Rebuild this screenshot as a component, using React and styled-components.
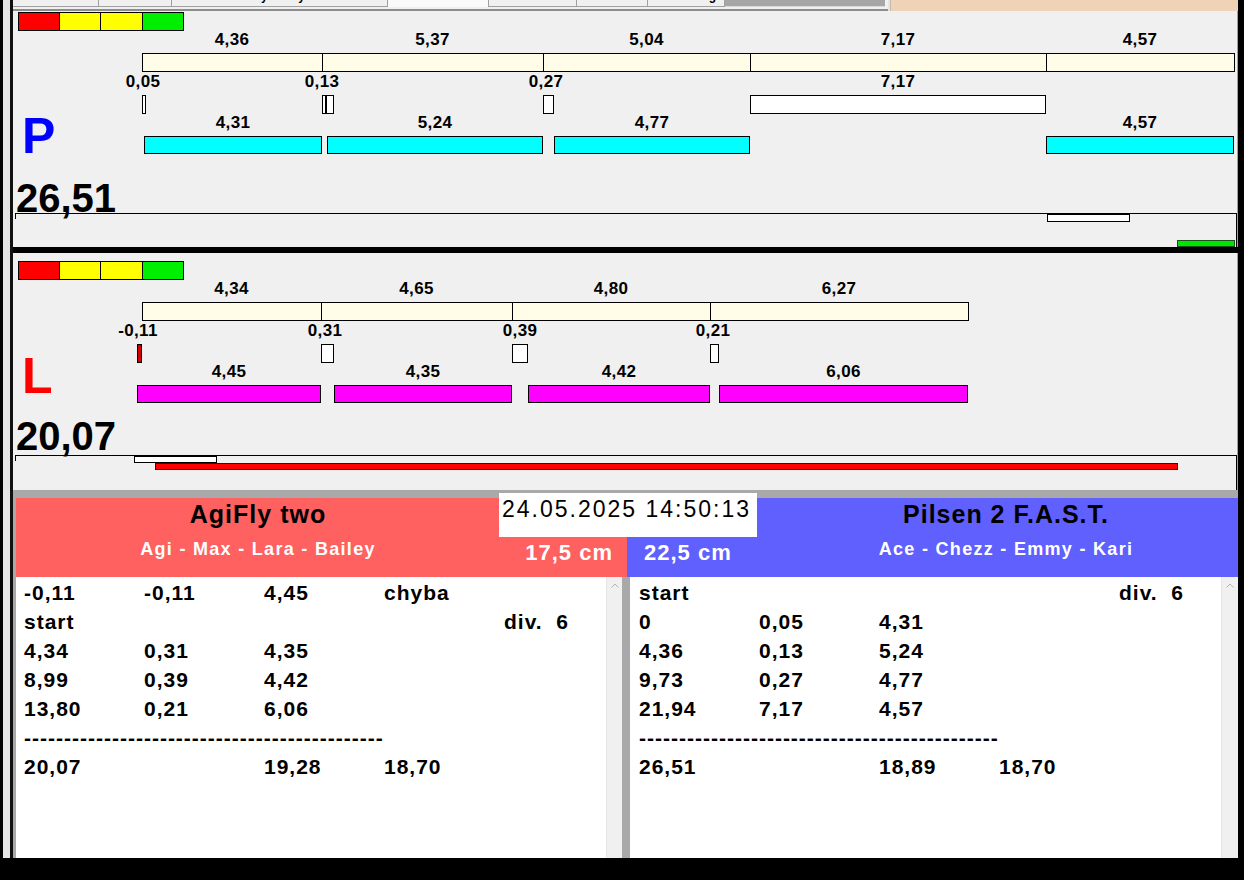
import React from 'react';
import styled, { createGlobalStyle } from 'styled-components';

const GlobalStyle = createGlobalStyle`
  html, body { margin: 0; padding: 0; background: #000; }
  body { font-family: "Liberation Sans", Arial, sans-serif; }
  #root { width: 1244px; height: 880px; }
`;

/* ---------- scale of the time charts ---------- */
const SCALE = 41.19; // px per second
const X0 = 10; // chart-local x of t = 0
const px = (t) => Math.round(X0 + t * SCALE);

/* ---------- window frame ---------- */
const Screen = styled.div`
  width: 1244px;
  height: 880px;
  background: #000;
  overflow: hidden;
`;

const Window = styled.div`
  margin-left: 3px;
  width: 1235px;
  height: 858px;
  background: #e4e4e4;
  display: flex;
`;

const Frame = styled.div`
  margin-left: 7px;
  flex: 1;
  min-width: 0;
  border-left: 3px solid #111;
  display: flex;
  flex-direction: column;
`;

/* ---------- tab strip ---------- */
const TabStrip = styled.div`
  height: 11px;
  display: flex;
  flex: none;
  overflow: hidden;
`;

const TabGroup = styled.div`
  width: 875px;
  height: 11px;
  box-sizing: border-box;
  background: #f0f0f0;
  border-bottom: 2px solid #8c8c8c;
  display: flex;
  align-items: flex-start;
`;

const Tab = styled.div`
  width: ${(p) => p.$w}px;
  height: 7px;
  box-sizing: border-box;
  flex: none;
  overflow: hidden;
  background: ${(p) => (p.$active ? '#fafafa' : '#f0f0f0')};
  border-right: 1px solid #a0a0a0;
  border-bottom: ${(p) => (p.$active ? 'none' : '1px solid #a0a0a0')};
`;

const TabText = styled.div`
  font-size: 12px;
  font-weight: bold;
  line-height: 14px;
  margin-top: -11px;
  padding-left: ${(p) => p.$pl}px;
  white-space: nowrap;
  color: #000;
`;

const TabFiller = styled.div`
  width: ${(p) => p.$w}px;
  height: 6px;
  flex: none;
  background: #a6a6a6;
  border-bottom: 1px solid #d8d8d8;
`;

const PeachTab = styled.div`
  flex: 1;
  height: 11px;
  margin-left: 2px;
  background: #f0d2b6;
  border-left: 1px solid #c8b8a8;
`;

/* ---------- chart sections ---------- */
const ChartSection = styled.section`
  height: ${(p) => p.$h}px;
  padding-top: ${(p) => p.$pt}px;
  box-sizing: border-box;
  flex: none;
  background: #f0f0f0;
  border-right: 1px solid #a0a0a0;
  display: flex;
  flex-direction: column;
`;

const Legend = styled.div`
  margin-left: 5px;
  height: 19px;
  width: fit-content;
  box-sizing: border-box;
  border: 1px solid #000;
  display: flex;
`;

const LegendCell = styled.div`
  width: ${(p) => p.$w}px;
  background: ${(p) => p.$c};
  & + & {
    border-left: 1px solid #000;
  }
`;

const Body = styled.div`
  height: ${(p) => p.$h}px;
  display: grid;
  grid-template-columns: 119px 1fr;
`;

const SideCol = styled.div`
  display: flex;
  flex-direction: column;
`;

const Letter = styled.div`
  margin-top: ${(p) => p.$mt}px;
  margin-left: 9px;
  font-size: 50px;
  line-height: 50px;
  font-weight: bold;
  color: ${(p) => p.$c};
`;

const Total = styled.div`
  margin-top: ${(p) => p.$mt}px;
  margin-left: 3px;
  font-size: 40px;
  line-height: 32px;
  font-weight: bold;
  color: #000;
  white-space: nowrap;
`;

const Chart = styled.div`
  display: flex;
  flex-direction: column;
`;

const LabelRow = styled.div`
  position: relative;
  height: ${(p) => p.$h}px;
`;

const Label = styled.span`
  position: absolute;
  top: ${(p) => p.$top}px;
  transform: translateX(-50%);
  font-size: 17px;
  line-height: 18px;
  font-weight: bold;
  letter-spacing: 0.3px;
  white-space: nowrap;
  color: #000;
`;

const Track = styled.div`
  position: relative;
  height: ${(p) => p.$h}px;
`;

const Seg = styled.div`
  position: absolute;
  top: 0;
  bottom: 0;
  box-sizing: border-box;
  border: 1px solid #000;
  background: ${(p) => p.$c};
`;

const StripBox = styled.div`
  position: relative;
  height: ${(p) => p.$h}px;
  box-sizing: border-box;
  margin-left: 2px;
  border-top: 1px solid #000;
  border-right: 1px solid #000;
  &::before {
    content: '';
    position: absolute;
    left: 0;
    top: 0;
    width: 1px;
    height: 5px;
    background: #000;
  }
`;

const Marker = styled.div`
  position: absolute;
  box-sizing: border-box;
  border: 1px solid ${(p) => p.$b || '#000'};
  background: ${(p) => p.$c};
`;

const ThickRule = styled.div`
  height: 6px;
  flex: none;
  background: #000;
`;

const GreyBand = styled.div`
  height: 8px;
  flex: none;
  background: #a9a9a9;
`;

/* ---------- bottom: teams + result lists ---------- */
const Bottom = styled.div`
  position: relative;
  flex: 1;
  min-height: 0;
  padding-left: 3px;
  background: #a9a9a9;
  display: flex;
  flex-direction: column;
`;

const HeaderRow = styled.div`
  height: 79px;
  flex: none;
  display: grid;
  grid-template-columns: 611px 611px;
`;

const TeamHeader = styled.div`
  background: ${(p) => p.$c};
  display: flex;
`;

const NameBlock = styled.div`
  flex: ${(p) => (p.$w ? 'none' : '1')};
  width: ${(p) => (p.$w ? `${p.$w}px` : 'auto')};
  display: flex;
  flex-direction: column;
  align-items: center;
`;

const TeamTitle = styled.div`
  font-size: 25px;
  line-height: 33px;
  font-weight: bold;
  letter-spacing: 1px;
  color: #000;
  white-space: nowrap;
`;

const TeamDogs = styled.div`
  margin-top: 6px;
  font-size: 18px;
  line-height: 24px;
  font-weight: bold;
  letter-spacing: 1.3px;
  color: #fff;
  white-space: nowrap;
`;

const HeightBlock = styled.div`
  flex: ${(p) => (p.$w ? 'none' : '1')};
  width: ${(p) => (p.$w ? `${p.$w}px` : 'auto')};
  display: flex;
  flex-direction: column;
  justify-content: flex-end;
  align-items: ${(p) => (p.$right ? 'flex-end' : 'flex-start')};
  padding: ${(p) => (p.$right ? '0 14px 12px 0' : '0 0 12px 17px')};
`;

const HeightText = styled.div`
  font-size: 22px;
  line-height: 24px;
  font-weight: bold;
  letter-spacing: 1px;
  color: #fff;
  white-space: nowrap;
`;

const DateBox = styled.div`
  position: absolute;
  left: 486px;
  top: -5px;
  width: 258px;
  height: 44px;
  box-sizing: border-box;
  padding: 3px 0 0 3px;
  background: #fff;
  font-size: 23px;
  line-height: 26px;
  letter-spacing: 2px;
  color: #000;
  white-space: nowrap;
`;

const ListsRow = styled.div`
  flex: 1;
  min-height: 0;
  display: grid;
  grid-template-columns: 606px 608px;
  column-gap: 8px;
`;

const ListPanel = styled.div`
  display: flex;
  background: #fff;
  min-height: 0;
  min-width: 0;
`;

const ListBody = styled.div`
  flex: 1;
  min-width: 0;
  overflow: hidden;
  padding: 1px 0 0 ${(p) => p.$pl}px;
  display: grid;
  grid-template-columns: repeat(4, 120px) 1fr;
  grid-auto-rows: 29px;
  align-content: start;
  font-size: 21px;
  line-height: 29px;
  font-weight: bold;
  letter-spacing: 1px;
  color: #000;
`;

const Cell = styled.div`
  white-space: pre;
`;

const DashCell = styled.div`
  grid-column: 1 / -1;
  white-space: nowrap;
`;

const ScrollBar = styled.div`
  width: ${(p) => p.$w}px;
  flex: none;
  background: #f0f0f0;
  border-left: 1px solid #e6e6e6;
  display: flex;
  justify-content: center;
  align-items: flex-start;
  padding-top: 6px;
  box-sizing: border-box;
`;

/* ---------- data ---------- */
const cumulative = (parts) => {
  const out = [];
  let t = 0;
  parts.forEach((p) => {
    out.push([t, +(t + p.v).toFixed(2), p.label]);
    t = +(t + p.v).toFixed(2);
  });
  return out;
};

const CHARTS = [
  {
    key: 'P',
    letter: 'P',
    letterColor: '#0000ff',
    total: '26,51',
    h: 236,
    pt: 1,
    bodyH: 182,
    letterTop: 80,
    totalTop: 21,
    stripH: 34,
    main: cumulative([
      { v: 4.36, label: '4,36' },
      { v: 5.37, label: '5,37' },
      { v: 5.04, label: '5,04' },
      { v: 7.17, label: '7,17' },
      { v: 4.57, label: '4,57' },
    ]),
    gaps: [
      [0, 0.05, '#fff'],
      [4.36, 4.46, '#fff'],
      [4.46, 4.65, '#fff'],
      [9.73, 10.0, '#fff'],
      [14.77, 21.94, '#fff'],
    ],
    gapLabels: [
      [0.025, '0,05'],
      [4.38, '0,13'],
      [9.82, '0,27'],
      [18.355, '7,17'],
    ],
    dogColor: '#00ffff',
    dogs: [
      [0.05, 4.36, '4,31'],
      [4.49, 9.73, '5,24'],
      [10.0, 14.77, '4,77'],
      [21.94, 26.51, '4,57'],
    ],
    markers: [
      { left: 1032, top: 0, w: 83, h: 8, c: '#fff' },
      { left: 1162, top: 26, w: 58, h: 7, c: '#00e600', b: '#1a4d1a' },
    ],
  },
  {
    key: 'L',
    letter: 'L',
    letterColor: '#ff0000',
    total: '20,07',
    h: 237,
    pt: 8,
    bodyH: 175,
    letterTop: 71,
    totalTop: 19,
    stripH: 35,
    main: cumulative([
      { v: 4.34, label: '4,34' },
      { v: 4.65, label: '4,65' },
      { v: 4.8, label: '4,80' },
      { v: 6.27, label: '6,27' },
    ]),
    gaps: [
      [-0.11, 0, '#d40000'],
      [4.34, 4.65, '#fff'],
      [8.99, 9.38, '#fff'],
      [13.79, 14.0, '#fff'],
    ],
    gapLabels: [
      [-0.1, '-0,11'],
      [4.44, '0,31'],
      [9.18, '0,39'],
      [13.87, '0,21'],
    ],
    dogColor: '#ff00ff',
    dogs: [
      [-0.11, 4.34, '4,45'],
      [4.65, 8.99, '4,35'],
      [9.38, 13.79, '4,42'],
      [14.0, 20.06, '6,06'],
    ],
    markers: [
      { left: 119, top: 0, w: 83, h: 7, c: '#fff' },
      { left: 140, top: 7, w: 1023, h: 7, c: '#ff0000', b: '#5a0000' },
    ],
  },
];

const LEGEND = [
  ['#ff0000', 40],
  ['#ffff00', 40],
  ['#ffff00', 41],
  ['#00ee00', 40],
];

const DASHES = '-'.repeat(45);

const LEFT_ROWS = [
  ['-0,11', '-0,11', '4,45', 'chyba', ''],
  ['start', '', '', '', 'div.  6'],
  ['4,34', '0,31', '4,35'],
  ['8,99', '0,39', '4,42'],
  ['13,80', '0,21', '6,06'],
  'dash',
  ['20,07', '', '19,28', '18,70'],
];

const RIGHT_ROWS = [
  ['start', '', '', '', 'div.  6'],
  ['0', '0,05', '4,31'],
  ['4,36', '0,13', '5,24'],
  ['9,73', '0,27', '4,77'],
  ['21,94', '7,17', '4,57'],
  'dash',
  ['26,51', '', '18,89', '18,70'],
];

const TABS = [
  { w: 86 },
  { w: 73 },
  { w: 216, text: 'Výsledky', pl: 81 },
  { w: 101, active: true },
  { w: 88 },
  { w: 71 },
  { w: 77, text: 'Log', pl: 46 },
];

/* ---------- components ---------- */
const ChartBlock = ({ d }) => (
  <ChartSection $h={d.h} $pt={d.pt}>
    <Legend>
      {LEGEND.map(([c, w], i) => (
        <LegendCell key={i} $c={c} $w={w} />
      ))}
    </Legend>
    <Body $h={d.bodyH}>
      <SideCol>
        <Letter $mt={d.letterTop} $c={d.letterColor}>
          {d.letter}
        </Letter>
        <Total $mt={d.totalTop}>{d.total}</Total>
      </SideCol>
      <Chart>
        <LabelRow $h={22}>
          {d.main.map(([a, b, label]) => (
            <Label key={label + a} $top={0} style={{ left: (px(a) + px(b)) / 2 }}>
              {label}
            </Label>
          ))}
        </LabelRow>
        <Track $h={19}>
          {d.main.map(([a, b]) => (
            <Seg
              key={a}
              $c="#fffde7"
              style={{ left: px(a), width: px(b) - px(a) + 1 }}
            />
          ))}
        </Track>
        <LabelRow $h={23}>
          {d.gapLabels.map(([t, label]) => (
            <Label key={label} $top={1} style={{ left: px(t) }}>
              {label}
            </Label>
          ))}
        </LabelRow>
        <Track $h={19}>
          {d.gaps.map(([a, b, c]) => (
            <Seg
              key={a}
              $c={c}
              style={{ left: px(a), width: Math.max(4, px(b) - px(a)) }}
            />
          ))}
        </Track>
        <LabelRow $h={22}>
          {d.dogs.map(([a, b, label]) => (
            <Label key={label + a} $top={0} style={{ left: (px(a) + px(b)) / 2 }}>
              {label}
            </Label>
          ))}
        </LabelRow>
        <Track $h={18}>
          {d.dogs.map(([a, b]) => (
            <Seg
              key={a}
              $c={d.dogColor}
              style={{ left: px(a), width: px(b) - px(a) }}
            />
          ))}
        </Track>
      </Chart>
    </Body>
    <StripBox $h={d.stripH}>
      {d.markers.map((m, i) => (
        <Marker
          key={i}
          $c={m.c}
          $b={m.b}
          style={{ left: m.left, top: m.top, width: m.w, height: m.h }}
        />
      ))}
    </StripBox>
  </ChartSection>
);

const UpArrow = () => (
  <svg width="8" height="5" viewBox="0 0 8 5">
    <polyline points="0.5,4.5 4,1 7.5,4.5" fill="none" stroke="#b4b4b4" strokeWidth="1" />
  </svg>
);

const ResultList = ({ rows, pl, sbw }) => (
  <ListPanel>
    <ListBody $pl={pl}>
      {rows.map((r, i) =>
        r === 'dash' ? (
          <DashCell key={i}>{DASHES}</DashCell>
        ) : (
          [0, 1, 2, 3, 4].map((c) => <Cell key={`${i}-${c}`}>{r[c] || ''}</Cell>)
        )
      )}
    </ListBody>
    <ScrollBar $w={sbw}>
      <UpArrow />
    </ScrollBar>
  </ListPanel>
);

export default function App() {
  return (
    <>
      <GlobalStyle />
      <Screen>
        <Window>
          <Frame>
            <TabStrip>
              <TabGroup>
                {TABS.map((t, i) => (
                  <Tab key={i} $w={t.w} $active={t.active}>
                    {t.text && <TabText $pl={t.pl}>{t.text}</TabText>}
                  </Tab>
                ))}
                <TabFiller $w={160} />
              </TabGroup>
              <PeachTab />
            </TabStrip>

            <ChartBlock d={CHARTS[0]} />
            <ThickRule />
            <ChartBlock d={CHARTS[1]} />
            <GreyBand />

            <Bottom>
              <HeaderRow>
                <TeamHeader $c="#ff6060">
                  <NameBlock $w={484}>
                    <TeamTitle>AgiFly two</TeamTitle>
                    <TeamDogs>Agi - Max - Lara - Bailey</TeamDogs>
                  </NameBlock>
                  <HeightBlock $right>
                    <HeightText>17,5 cm</HeightText>
                  </HeightBlock>
                </TeamHeader>
                <TeamHeader $c="#6060ff">
                  <HeightBlock $w={130}>
                    <HeightText>22,5 cm</HeightText>
                  </HeightBlock>
                  <NameBlock>
                    <TeamTitle>Pilsen 2 F.A.S.T.</TeamTitle>
                    <TeamDogs>Ace - Chezz - Emmy - Kari</TeamDogs>
                  </NameBlock>
                </TeamHeader>
              </HeaderRow>
              <DateBox>24.05.2025 14:50:13</DateBox>
              <ListsRow>
                <ResultList rows={LEFT_ROWS} pl={8} sbw={16} />
                <ResultList rows={RIGHT_ROWS} pl={9} sbw={17} />
              </ListsRow>
            </Bottom>
          </Frame>
        </Window>
      </Screen>
    </>
  );
}
